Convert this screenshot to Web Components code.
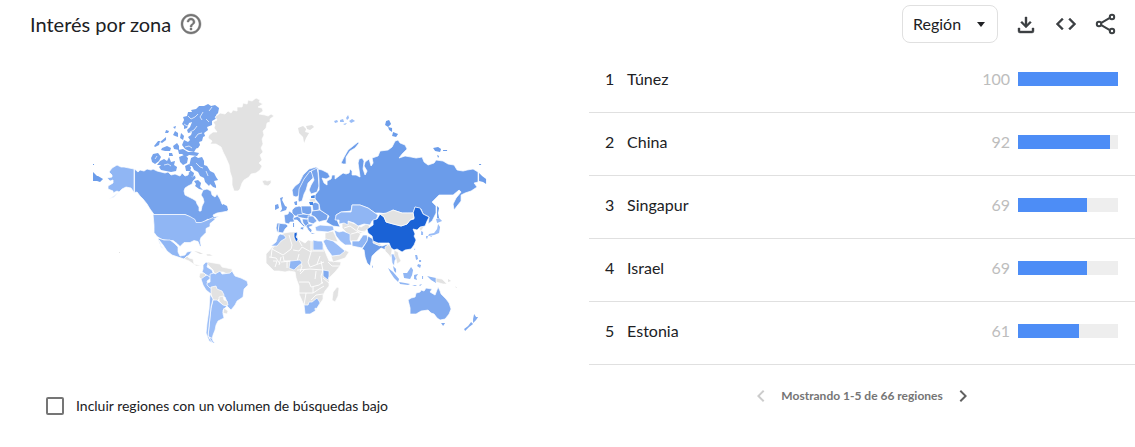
<!DOCTYPE html>
<html lang="es">
<head>
<meta charset="utf-8">
<meta name="viewport" content="width=device-width, initial-scale=1">
<title>Interés por zona</title>
<style>
  body { margin: 0; background: #fff; color: #202124; font-family: Lato, "Open Sans", sans-serif; }
</style>
</head>
<body>
<geo-widget></geo-widget>
<script>
const define = (name, html, setup) => customElements.define(name, class extends HTMLElement {
  constructor() {
    super();
    const root = this.attachShadow({ mode: 'open' });
    const template = document.createElement('template');
    template.innerHTML = html;
    root.append(template.content.cloneNode(true));
    if (setup) setup.call(this, root);
  }
});

define('icon-button', `
<style>
  :host { display: block; }
  button { display: grid; place-items: center; width: 100%; padding: 8px; border: 0; background: none; color: inherit; cursor: pointer; }
  ::slotted(svg) { display: block; width: 24px; height: 24px; fill: currentColor; }
</style>
<button type="button"><slot></slot></button>`, function (root) {
  const button = root.querySelector('button');
  button.setAttribute('aria-label', this.getAttribute('label') || '');
  button.disabled = this.hasAttribute('disabled');
});

define('widget-header', `
<style>
  :host { display: flex; align-items: center; height: 50px; padding: 0 9px 2px 30px; box-sizing: border-box; }
  h2 { margin: 0; font-size: 20px; line-height: 24px; font-weight: 400; }
  .help { width: 40px; color: #757575; }
  .tools { display: flex; align-items: center; margin-left: auto; color: #3c4043; }
  .tools icon-button { width: 40px; }
  .picker { display: grid; align-items: center; margin-right: 8px; color: #202124; }
  select { grid-area: 1 / 1; appearance: none; width: 96px; height: 38px; padding: 0 10px; border: 1px solid #e0e0e0; border-radius: 8px; background: #fff; color: inherit; font: 16px/24px Lato, sans-serif; }
  .picker svg { grid-area: 1 / 1; justify-self: end; margin-right: 12px; width: 10px; height: 5px; pointer-events: none; }
</style>
<h2>Interés por zona</h2>
<icon-button class="help" label="Ayuda"><svg viewBox="0 0 24 24"><path stroke="currentColor" stroke-width=".4" d="M11 18h2v-2h-2v2zm1-16C6.480 2 2 6.480 2 12s4.480 10 10 10 10-4.480 10-10S17.520 2 12 2zm0 18c-4.410 0-8-3.590-8-8s3.590-8 8-8 8 3.590 8 8-3.590 8-8 8zm0-14c-2.210 0-4 1.790-4 4h2c0-1.100.9-2 2-2s2 .9 2 2c0 2-3 1.750-3 5h2c0-2.250 3-2.500 3-5 0-2.210-1.790-4-4-4z"/></svg></icon-button>
<div class="tools">
  <div class="picker">
    <select aria-label="Nivel de zona"><option>Región</option><option>Ciudad</option></select>
    <svg viewBox="0 0 10 5"><path d="M1 0h8L5 5z" fill="#202124"/></svg>
  </div>
  <icon-button label="Descargar"><svg viewBox="0 0 24 24"><path stroke="currentColor" stroke-width=".4" d="M11 5h2v7.200l3-3 1.400 1.400L12 16l-5.400-5.400L8 9.200l3 3zM4 16h2v3h12v-3h2v3a2 2 0 0 1-2 2H6a2 2 0 0 1-2-2z"/></svg></icon-button>
  <icon-button label="Insertar"><svg viewBox="0 0 24 24"><path stroke="currentColor" stroke-width=".4" d="M9.400 16.600 4.800 12l4.600-4.600L8 6l-6 6 6 6zm5.200 0 4.600-4.600-4.600-4.600L16 6l6 6-6 6z"/></svg></icon-button>
  <icon-button label="Compartir"><svg viewBox="0 0 24 24"><g fill="none" stroke="currentColor" stroke-width="2"><path d="M7.300 10.900 15.800 5.900M7.300 13.100l8.500 5"/><circle cx="5" cy="12" r="2.200"/><circle cx="18" cy="5" r="2.200"/><circle cx="18" cy="19" r="2.200"/></g></svg></icon-button>
</div>`);

define('world-map', `
<style>
  :host { display: block; }
  svg { display: block; width: 100%; height: auto; }
  path { stroke: #fff; stroke-width: .7; stroke-linejoin: round; }
  .isl path { stroke: none; }
  .lines { fill: none; stroke: #fff; stroke-width: .9; }
  .none { fill: #e2e2e2; }
  .a { fill: #9abdf7; } .b { fill: #90b6f4; } .c { fill: #80aaef; } .d { fill: #76a3ec; }
  .e { fill: #6b9cea; } .f { fill: #4484e4; } .g { fill: #1a62d6; }
</style>
<svg viewBox="0 50 589 320" role="img" aria-label="Mapa mundial del interés por región">
  <!-- North America -->
  <path class="d" d="M134.500 169L138 172 140 170 144 171 147 169 151 170 153 169 157 171 161 172 165 173 168 172 171 175 175 174 180 176 182 173 185 176 188 175 189 171 192 173 192 177 195 175 196 178 193 181 192 184 188 186 185 188 184 191 185 195 189 197 193 199 196 201 197 204 199 207 199 211 201 211 202 206 204 202 203 198 201 195 203 190 207 189 211 191 212 195 215 197 217 194 220 199 222 204 226 208 228 211 223 212 217 213 213 215 214 217 219 216 214 219 210 221 208 219 202 223 196 223 190 217 185 214.500H154L150 209 147 204 143 199 140 196 137 192 134.500 192.500z"/>
  <g class="d isl">
    <path d="M219 108l-4-3-4 1-3-2-4 2-5 0-3 3-5 1 1 2-4 0-1 4-4 1 1 3-2 4 2 2 0 3 3-1 2-5 3-1-2 5-3 3 1 3 4-1-1 3-3 2 2 3-2 2 4 1-2 3 3 3 5-1 2-3-1-3 3-1 1-4 2-1-1-3 4-3-1-3 5-2 0-4 5-3-1-3 2-2z"/>
    <path d="M191 158l4-2 3 2 4-1 2 4 0 4 3 1 3 5 4 2 2 4 2 3-4 1 2 5 0 2-3-1-3-3-1 2-4-4-1-4-4-2-2-4-4-2-2-4-3 0 1-4zM153 154l5-1 3 4-2 4-4 3-3-2-1-4zM160 161l4-2 3 2 2-4 2 5 4-1-1 4 3 2-1 4-5 1-5-1-5-1-2-3 2-2-4 0zM154 146l4-5 2 0-1 4-4 2zM160 142l6-5 0 3-4 3zM162 148l5-2 4 2-1 3-5 0-4-1zM173 146l4-3 2 3 0 4-5-1zM173 135l2-4 3 2 0 4-3-1zM181 133l3 3-1 4-3-2zM184 140l4 2 5-1 4 3 0 3-3 5-5-1-4-2-3-4zM178 150l5-1 5 3 6 0 5 1-2 3-8-1-3 2-4-3-3 0zM179 157l5-2 4 3-1 5-4 2-3-3zM185 166l4-2 2 4-1 3-4 0zM194 181l4-1 3 3-1 4 3 3-4-1-4-3 1-2zM190 170l4 3-1 4-3-1zM223 204l4 2 1 4-4 1-3-3z"/>
    <path d="M192 163l2 1 0 3-2-1zM166 130l3 1-1 2-3 0zM169 153l3 0 1 3-4 0zM173 127l3-1-1 3zM196 157l2 3-2 2z"/>
  </g>
  <g class="lines"><path d="M184 124l3 2 4-2M188 116l3 3 4-2 3-3M203 112l-3 5 2 3M190 132l4-2 3-4M195 138l3-4 4-1M206 119l3 3M212 107l-3 4M185 147l4-1 3 2M164 165l4-1 3 2M196 163l4 4 3 1M206 171l2 5M157 156l-2 3"/></g>
  <path class="b" d="M134 169l-5-1-5-1-3 0-4-2-5 3-3 4 3 3 0 2-5 1 3 3 3-1 0 3-5 3 0 3 5 2 0 2 4-2 2 1-5 4-5 3 5-2 5-5 3-3 4-2 5 1L134 192.500z"/>
  <path class="b" d="M153 214.500H185l5 2 5 3 1 3 5 0 5-2 7-3 2 2-5 4 0 3-4 2 0 4-5 5-1 3 1 5-1 1-2-5-4-1-4 2-6 0-4 4-3-3-4-3-5 0-6-1-5-3-3-4 0-7z"/>
  <path class="b" d="M158 238l6 2 6 0 4 3 4 4 0 5 2 4 5-1 2-3 5-1-3 4-3 2-2 2-6-2-6-2-5-4-4-6-4-5 2 6 3 4-3-3-2-5z"/>
  <path class="none" d="M184 259l3-3 2 2 4 1 1 5 4 1 3 1-5 0-4-3-3-2zM206 254l4 0 3 2-6 0z"/>
  <g class="isl"><path class="none" d="M194 251l5 1 4 2-3 0zM119 252h1v1h-1z"/></g>
  <path class="none" d="M220 113L225 114 228 111 231 113 233 110 237 111 237 107 242 107 243 103 247 104 248 100 252 101 256 98 260 100 259 102 263 104 258 107 262 108 263 111 259 114 265 115 268 116 271 114 274 116 270 119 270 122 267 123 266 128 263 131 264 135 262 139 263 144 261 148 263 152 260 155 262 160 259 163 262 166 260 170 256 173 251 174 249 177 244 180 242 183 240 189 238 191 234 191 232 185 232 178 230 172 229 165 226 158 223 152 221 147 216 144 210 144 212 141 208 138 209 135 213 132 217 132 214 128 215 125 213 122 217 120 215 117z"/>
  <path class="none" d="M262 181l3-1 2 1 4-1 0 3-3 3-4-1z"/>
  <!-- South America -->
  <path class="none" d="M206 263l2-1 6 1 6 1 2 3 5 1 5 1 0 4-5 1-4-2-2 0-4 2-3-1-1-3z"/>
  <path class="a" d="M203 265l3-3 2 1-1 4 5 3 1 3-2 5-3-2-6-4 1-3z"/>
  <path class="none" d="M200 273l4 0 2 2-2 3-2 2-3-3z"/>
  <path class="a" d="M201 279l4-3 2-1 4 3-4 3 1 4 4 2 0 4-1 3-5-4-3-5z"/>
  <path class="a" d="M210 274l4-1 1 1 5-3 2 3 8-1 2-2 3 5 6 2 6 3 1 4-4 4-1 8-6 4-2 4-4 5-5-5 1-3-2-5-3-1-1-4-5-2-1-3-5 1-3-3 0-2 3-1z"/>
  <path class="none" d="M211 287l5-1 1 3 5 2 2 4-1 4-4 0-2 2-4-1-2-6z"/>
  <path class="none" d="M219 297l4-1 1 4 3 1 1 4-4 1-5-5z"/>
  <path class="a" d="M213 300l4 0 6 5 4 1-4 4 0 4 1 4-6 3-2 4-1 5-2 5-1 4-4-3 1-9 1-10 1-9z"/>
  <path class="none" d="M224 308l4 3-1 3-4-1z"/>
  <path class="a" d="M210 294l3 5-2 8-1 10-1 9-1 10 5 7-4-2-3-8 1-10 2-14z"/>
  <path class="a" d="M209 338l4 5 2 0-2-2-1-3z"/>
  <!-- Africa and Arabia -->
  <path class="none" d="M275 244l4-9 5-2 6-1 7 0 1 7 7 4 3-3 5 1 9 0 2 8 5 12 12 1-1 4-5 6-6 6 0 8-4 5-2 4 0 4-5 8-7 4-5 0-3-8-4-9 0-8-3-8-1-6-6-1-4 1-6-1-5 0-8-8 0-9z"/>
  <path class="none" d="M333 292l4-5 2 1-1 8-3 6-3-2z"/>
  <path class="lines" d="M277 242l-5 7-1 8M272 249l11 6 8-6 1-4-3-10M293 250l6 1 3-4 9 5 0-13M311 251h13M302 246l-4-7M299 254l-2 7M311 252l-3 10M308 262l2 5 8-3 6-2M299 260l3 6-2 6M281 257l-2 8M269 257l7 1 4 6M273 261l4 0-2 6M283 256l1 5 6 0M287 262l0 6M297 270l13-1 13 1M323 270l-2 6 1 8M321 261l2 10M299 282l10 0 2 5 8-2 4-3M298 293l15 0 0-6M306 293l-2 12M313 293l6-4 5-3M311 300l5-5 7-1M328 262l4 4 8 0M320 256l-3 8M323 278l6 5M300 274l5-5M316 271l-1 8M281 262l10-1"/>
  <path class="b" d="M271 246l5-4 2-6 2-2 4 1 2 3-5 3-4 5z"/>
  <path class="g" d="M294 233l3-1 0 3-1 2 2 2-1 2-1 1-2-5z"/>
  <path class="a" d="M313 240l5 1 4 0 1 3 0 6-10 0z"/>
  <path class="b" d="M290 261l10-1 2 3-4 3-4 4-5-2z"/>
  <path class="c" d="M323 270l6 1 0 5-1 4-5-4z"/>
  <path class="b" d="M304 305l4 0 1-3 3 0 5-4 2 3 1 2-5 8-5 3-5 0z"/>
  <path class="none" d="M315 308l2 1-2 1z"/>
  <path class="none" d="M325 233l8-2 2 4 3 7-5-1-8-2z"/>
  <path class="none" d="M331 256l8-1 6-5 4 2-4 6-12 4z"/>
  <path class="a" d="M323 241l3-2 7 2 5 4 7 6-5 4-8 1-5-7z"/>
  <path class="none" d="M342 224l3-3 5 1 5 2 6 3 5-3 3 1 1 3-3 1-2 3-4 1-4 8-7 0-3-8-5-5z"/>
  <path class="lines" d="M344 228l6-2 12 9M351 234l7-2 8-1M359 226l-2 4 8 3"/>
  <path class="a" d="M334 230l5 2 4-1 7 3 0 6 2 5-7 0-5-4-4-5z"/>
  <path class="b" d="M352 241l7 0 4-6 4 0 1 5-6 8-10-2z"/>
  <path class="a" d="M315 227l5-2 13 1 1 4-6 2-12-1z"/>
  <!-- Europe -->
  <path class="d" d="M277 223l9 1 2 2-3 3-2 4-6-1-1-4z"/>
  <path class="lines" d="M279 224l-1 8"/>
  <path class="d" d="M284 215l4-1 1-3 5 3 0 8-4 0-1 2-4-1z"/>
  <path class="d" d="M292 210l3-3 4-1 3 1 1 6-2 3-6 0-3-3z"/>
  <path class="d" d="M301 206l10 0 1 7-4 2-6-2z"/>
  <path class="d" d="M293 218l5-2 2 2 2 5 3 3-1 1-4-4-3-3-3 0zM301 227l3 0-1 3-3-1z"/>
  <path class="d" d="M297 215l6-1 8 1-4 4-5-1-4-1zM302 219l6 0 1 5-2 4-4-5z"/>
  <path class="c" d="M308 216l5 0 4 5-4 3-5-2zM308 224l5 0-1 2-3 1 3 3-1 3-3-3-2-4z"/>
  <path class="d" d="M312 204l3-2 4 2 0 6-6 1z"/>
  <path class="d" d="M312 211l8-1 8 5-1 5-5 1-3 1-4-5-4-2z"/>
  <path class="none" d="M309 199l6-1 1 4-6 0z"/>
  <g class="f isl"><path d="M311 196l4-1 0 3-4 0zM309 202l4 0 0 3-3 0z"/></g>
  <path class="d" d="M293 196l-1-6 3-4 4-3 4-8 6-6 7-2 3 2-8 2-5 6-5 9-1 9-4 2z"/>
  <path class="d" d="M298 200l1-11 5-10 6-8 3 3 0 4-5 5-2 7-2 4-2 7-3 1z"/>
  <path class="d" d="M311 171l6-3 1 5 1 13-2 6-6 2-2-4 2-5 3-5z"/>
  <g class="d isl"><path d="M280 198l3-1-1 3 3 6 2 1-1 3-6 2 2-3-1-5zM275 205l3-1 1 4-4 2zM294 202l3-1 0 4-2 0zM293 223l1 0 0 4-1 0zM311 233l4 1-3 0z"/></g>
  <g class="none isl"><path d="M298 128l5-2 3 3-1 3 4 1-3 5-2 5-1-6-4-4zM306 126l6-1 2 2-4 3-3-1z"/></g>
  <!-- Asia -->
  <path class="e" d="M318 169L322 170 328 173 330 177 326 179 322 178 324 183 327 185 327 181 331 179 332 175 335 175 335 179 339 176 343 173 346 174 349 173 350 169 352 171 352 175 356 175 360 177 359 170 358 163 359 159 362 158 364 161 363 169 365 175 367 171 364 166 365 162 369 159 371 166 373 163 372 158 378 156 380 151 388 150 392 147 395 141 398 140 400 143 405 145 407 149 402 154 399 158 405 156 411 157 416 158 422 157 424 162 428 165 434 163 436 160 443 161 448 164 454 165 457 170 463 171 467 170 473 169 478 172 478 182 474 183 477 187 471 191 465 193 461 195 461 201 457 206 454 210 453 204 456 198 461 192 459 190 453 195 439 195 432 202 436 206 436 213 432 221 428 224 429 217 423 214 421 209 415 207 413 213 407 213 402 213 393 210 387 214 380 213 375 213 368 208 360 205 352 205 351 211 341 212 336 215 337 220 340 227 333 226 326 222 329 216 320 210 319 204 315 199 315 195 319 190 319 180z"/>
  <path class="e" d="M341 163l3-6 4-7 5-4 5-4 1 1-4 5-5 3-4 6 0 7-3 0z"/>
  <g class="e isl"><path d="M479 173l3 3 4 3 0 5-3-2-4-1zM93 172l4 4 1 0 5 3-3 3-3-1-4 0zM93 164l1 0 0 1-1 0zM479 164l2 0 0 1-2 0zM386 121l3-1 2 4-3 3-3-2zM388 127l4 1 0 4-3-2zM393 132l5 2-2 3-4-1zM433 148l5-1 3 2-1 3-5-1zM443 150l4 0 0 1-4 0zM437 155l2 1-1 2zM437 206l2 2-1 5 1 5-2 0z"/></g>
  <g class="a isl"><path fill="#9abdf7" d="M334 121l3-1 1 2-3 1zM340 120l3-1 1 3-4 0zM346 118l2-3 1 3-2 2zM349 121l3-2 3 2-4 2zM343 124l4-1-2 2z"/><path d="M436 219l3-1 3 3-5 2zM438 224l2 3-1 6-5 2-6 1 1-2 5-1 3-4zM426 236l2 0-1 3-1-1zM430 236h2l-1 1zM421 231l2 1 0 3-2 0zM414 250l1-2 0 2z"/></g>
  <path class="none" d="M419 227l5-1-2 4-2 1z"/>
  <path class="b" d="M336 215l5-3 10 0 1-7 8 0 8 3 7 5 3 2-2 5-4 1-2 4-6-1-6 2-4-3-6-2 0 4-4-2-5 1 0-4-4 0z"/>
  <path class="e" d="M362 249l5-8 1-5 5 3 3 5 6 2 6-2-2 6-5-2-5 4-4 4-2 10-3-3-2-6-1-7z"/>
  <path class="none" d="M373 241l8 3-1 2-7-3zM385 247l4-3 3 5-1 9-3-4-3-3z"/>
  <path class="g" d="M367 229L373 225 373 220 377 219 380 214 384 217 386 222 393 224 401 226 407 224 410 220 414 219 413 213 415 207 420 208 423 214 429 217 427 221 425 226 420 227 417 230 413 229 415 234 414 236 416 240 414 245 411 249 405 250 402 252 397 249 394 250 391 248 389 243 386 243 378 243 373 241 372 236 368 233z"/>
  <path class="none" d="M380 214l6-1 7-3 9 3 5 0 6 0 1 5-4 2-3 4-6 2-8-2-7-2-2-5z"/>
  <path class="a" d="M391 254l5 0 2 4-3 2-1 6-2-3z"/>
  <path class="none" d="M394 250l4 2 1 5 2 4-4 3-1-5-2-4z"/>
  <g class="b isl"><path d="M388 268l5 4 6 7-1 3-4-4-4-6zM393 266l3 3 0 4-2-2zM399 282l6 1 5 1-2 1-8-1zM403 273l4 0 4-6 2 3-1 5-2 4-6-1zM414 275l4-1-2 3 1 3-3-1zM415 255l2 0 1 4-2 1zM418 264l3 1-1 3-3-2zM419 260h2v2h-2zM427 276l4 1 5 1 0 5-5-3zM372 265l1 2-1 1zM412 285l5 0-2 1zM422 276h1v3h-1zM419 285l3-1-2 2z"/></g>
  <path class="none" d="M436 278l6 1 5 5-4 0-7-2z"/>
  <g class="none isl"><path d="M448 279l3 2-3 1zM455 286l2 2-1 0z"/></g>
  <!-- Oceania -->
  <path class="c" d="M408 300L411 298 415 297 416 293 420 292 421 290 424 291 426 288 432 289 430 292 435 295 438 287 440 291 441 294 446 299 449 303 451 309 449 314 445 319 440 320 437 318 434 314 431 313 428 310 421 311 416 314 410 314 410 308z"/>
  <g class="c isl"><path d="M441 323l4 0-2 3zM474 314l2 3 2 0-2 3-3 3 0-4zM471 322l2 2-4 3-4 4-1-2 4-3z"/></g>
</svg>`);

define('low-volume-option', `
<style>
  :host { display: block; padding: 24px 46px; }
  label { display: flex; align-items: center; gap: 12px; font-size: 14px; line-height: 24px; }
  input { appearance: none; width: 18px; height: 18px; margin: 0; border: 2px solid #757575; border-radius: 2px; background: #fff; flex: none; }
</style>
<label><input type="checkbox"><span><slot></slot></span></label>`);

define('score-bar', `
<style>
  :host { display: flex; align-items: center; justify-content: flex-end; gap: 8px; color: #bdbdbd; }
  .track { width: 100px; height: 14px; background: #eee; }
  .fill { height: 100%; background: #4d8df6; }
</style>
<span class="value"></span><div class="track"><div class="fill"></div></div>`);

customElements.define('region-table', class extends HTMLElement {
  constructor() {
    super();
    const rows = [['Túnez', 100], ['China', 92], ['Singapur', 69], ['Israel', 69], ['Estonia', 61]];
    const root = this.attachShadow({ mode: 'open' });
    root.innerHTML = `
<style>
  :host { display: block; }
  table { width: 100%; border-collapse: separate; border-spacing: 0; font-size: 16px; line-height: 24px; }
  td, th { padding: 17px 0 21px; border-bottom: 1px solid #e0e0e0; text-align: left; font-weight: 400; }
  .rank { width: 22px; padding-left: 16px; }
  .score { padding-right: 17px; }
</style>
<table aria-label="Interés por región"><tbody>${rows.map(([name, score], i) => `
  <tr><td class="rank">${i + 1}</td><th scope="row">${name}</th><td class="score"><score-bar></score-bar></td></tr>`).join('')}
</tbody></table>`;
    root.querySelectorAll('score-bar').forEach((bar, i) => {
      customElements.upgrade(bar);
      bar.shadowRoot.querySelector('.value').textContent = rows[i][1];
      bar.shadowRoot.querySelector('.fill').style.width = rows[i][1] + '%';
    });
  }
});

define('page-nav', `
<style>
  :host { display: flex; align-items: center; justify-content: center; height: 62px; color: #757575; font-size: 12px; line-height: 16px; font-weight: 700; }
  icon-button { width: 40px; color: #616161; }
  icon-button[disabled] { color: #ccc; }
</style>
<icon-button label="Anterior" disabled><svg viewBox="0 0 24 24"><path d="M15.400 7.400 14 6l-6 6 6 6 1.400-1.400L10.800 12z"/></svg></icon-button>
<span><slot></slot></span>
<icon-button label="Siguiente"><svg viewBox="0 0 24 24"><path d="M10 6 8.600 7.400l4.600 4.600-4.600 4.600L10 18l6-6z"/></svg></icon-button>`);

define('geo-widget', `
<style>
  :host { display: block; }
  main { display: grid; grid-template-columns: 109fr 101fr; align-items: start; }
</style>
<widget-header></widget-header>
<main>
  <section><world-map></world-map><low-volume-option>Incluir regiones con un volumen de búsquedas bajo</low-volume-option></section>
  <section><region-table></region-table><page-nav>Mostrando 1-5 de 66 regiones</page-nav></section>
</main>`);
</script>
</body>
</html>
